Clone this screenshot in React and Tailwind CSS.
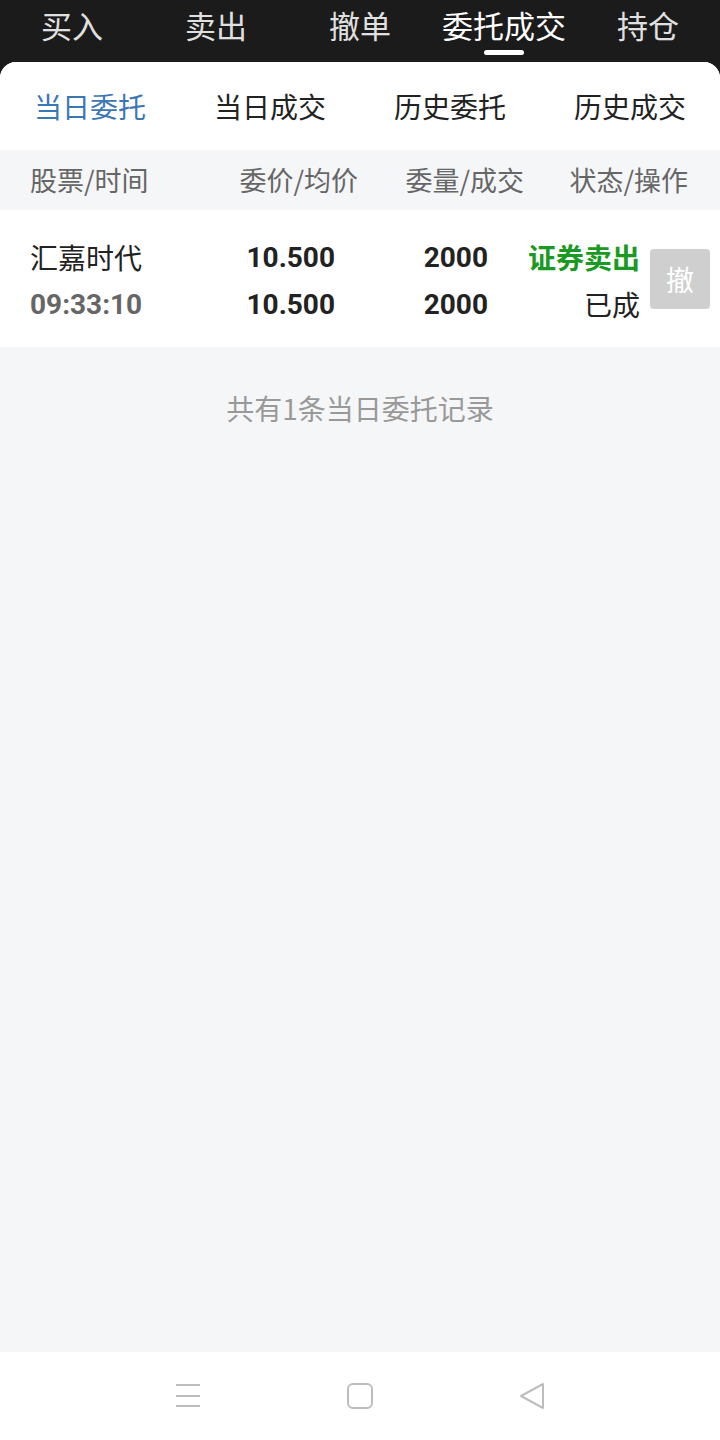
import React from 'react';

const topTabs = ['买入', '卖出', '撤单', '委托成交', '持仓'];
const subTabs = ['当日委托', '当日成交', '历史委托', '历史成交'];

const TopBar = () => (
    <div className="bg-[#1b1b1b] h-[62px] flex">
        {topTabs.map((t, i) => (
            <div key={t} className="w-[144px] flex flex-col items-center">
                <span className={`text-[31px] leading-none mt-[9px] ${i === 3 ? 'text-white' : 'text-[#e0e0e0]'}`}>{t}</span>
                {i === 3 && <span className="mt-[10px] w-[40px] h-[5px] rounded-full bg-white" />}
            </div>
        ))}
    </div>
);

const NavBar = () => (
    <div className="h-[88px] bg-white flex items-center justify-center">
        <div className="w-[370px] flex items-center justify-between">
            <svg width="26" height="26" viewBox="0 0 26 26" fill="none" stroke="#bdbdbd" strokeWidth="2">
                <path d="M1 2h24M1 13h24M1 23h24" />
            </svg>
            <svg width="26" height="26" viewBox="0 0 26 26" fill="none" stroke="#bdbdbd" strokeWidth="2">
                <rect x="1" y="1" width="24" height="24" rx="5" />
            </svg>
            <svg width="26" height="28" viewBox="0 0 26 28" fill="none" stroke="#bdbdbd" strokeWidth="2" strokeLinejoin="round">
                <path d="M2 14L24 2v24z" />
            </svg>
        </div>
    </div>
);

export default function App() {
    const num = { fontFamily: 'Roboto, sans-serif' };
    return (
        <div className="w-[720px] h-[1440px] flex flex-col bg-[#1b1b1b]" style={{ fontFamily: '"Noto Sans CJK SC", Roboto, sans-serif' }}>
            <TopBar />
            <div className="flex-1 flex flex-col bg-[#f5f6f8] rounded-t-[16px] overflow-hidden">
                {/* sub tabs */}
                <div className="h-[88px] bg-white flex items-center">
                    {subTabs.map((t, i) => (
                        <div key={t} className={`w-[180px] text-center text-[28px] ${i === 0 ? 'text-[#3b77b3]' : 'text-[#222]'}`}>{t}</div>
                    ))}
                </div>
                {/* header */}
                <div className="h-[60px] flex items-center text-[27px] text-[#666]">
                    <div className="w-[200px] pl-[30px]">股票/时间</div>
                    <div className="w-[158px] text-right">委价/均价</div>
                    <div className="w-[166px] text-right">委量/成交</div>
                    <div className="w-[164px] text-right">状态/操作</div>
                </div>
                {/* row */}
                <div className="h-[137px] bg-white flex items-center">
                    <div className="w-[200px] pl-[30px] pt-[4px] flex flex-col gap-[10px] leading-[37px]">
                        <span className="text-[28px] text-[#222]">汇嘉时代</span>
                        <span className="text-[28px] font-bold text-[#666]" style={num}>09:33:10</span>
                    </div>
                    <div className="w-[135px] pt-[4px] flex flex-col gap-[10px] leading-[37px] items-end font-bold text-[28px] text-[#222]" style={num}>
                        <span>10.500</span>
                        <span>10.500</span>
                    </div>
                    <div className="w-[153px] pt-[4px] flex flex-col gap-[10px] leading-[37px] items-end font-bold text-[28px] text-[#222]" style={num}>
                        <span>2000</span>
                        <span>2000</span>
                    </div>
                    <div className="w-[152px] pt-[4px] flex flex-col gap-[10px] leading-[37px] items-end text-[28px]">
                        <span className="text-[#1a9a22] font-bold">证券卖出</span>
                        <span className="text-[#222]">已成</span>
                    </div>
                    <div className="ml-[10px] w-[60px] h-[60px] rounded-[4px] bg-[#cfcfcf] text-white text-[28px] flex items-center justify-center">撤</div>
                </div>
                <div className="pt-[40px] text-center text-[28px] text-[#999]">共有1条当日委托记录</div>
                <div className="flex-1" />
                <NavBar />
            </div>
        </div>
    );
}
